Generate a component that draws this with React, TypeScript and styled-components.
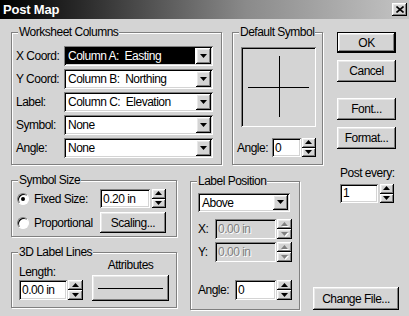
import { Fragment } from "react";
import styled, { createGlobalStyle, css } from "styled-components";

const FACE = "#d4d4d4";

const GlobalStyle = createGlobalStyle`
  html, body {
    margin: 0;
    padding: 0;
    background: ${FACE};
  }
  body {
    font-family: "Liberation Sans", Arial, sans-serif;
    font-size: 12px;
    letter-spacing: -0.5px;
    color: #000;
  }
  * {
    box-sizing: border-box;
  }
`;

const raised = css`
  background: ${FACE};
  box-shadow: inset -1px -1px #000, inset 1px 1px #fff, inset -2px -2px #808080, inset 2px 2px #e8e8e8;
`;

const sunken = css`
  box-shadow: inset 1px 1px #808080, inset -1px -1px #fff, inset 2px 2px #000, inset -2px -2px ${FACE};
`;

const columns = [
  { label: "X Coord:", value: "Column A:  Easting", selected: true },
  { label: "Y Coord:", value: "Column B:  Northing" },
  { label: "Label:", value: "Column C:  Elevation" },
  { label: "Symbol:", value: "None" },
  { label: "Angle:", value: "None" },
];

function Arrow({ up, disabled }: { up?: boolean; disabled?: boolean }) {
  const pts = up ? "0,4 3.5,0 7,4" : "0,0 7,0 3.5,4";
  return (
    <svg width="8" height="5" viewBox="0 0 8 5">
      {disabled && <polygon points={pts} fill="#fff" transform="translate(1,1)" />}
      <polygon points={pts} fill={disabled ? "#808080" : "#000"} />
    </svg>
  );
}

function Spinner({ height = 19, width = 14, disabled }: { height?: number; width?: number; disabled?: boolean }) {
  return (
    <SpinBox $h={height} $w={width}>
      <SpinHalf>
        <Arrow up disabled={disabled} />
      </SpinHalf>
      <SpinHalf>
        <Arrow disabled={disabled} />
      </SpinHalf>
    </SpinBox>
  );
}

function Combo({ width, height = 20, value, selected }: { width: number; height?: number; value: string; selected?: boolean }) {
  return (
    <ComboBox $w={width} $h={height}>
      <ComboText $selected={selected}>{value}</ComboText>
      <DropButton>
        <Arrow />
      </DropButton>
    </ComboBox>
  );
}

function Radio({ checked, label }: { checked?: boolean; label: string }) {
  return (
    <RadioRow>
      <RadioDot $checked={checked} />
      <span>{label}</span>
    </RadioRow>
  );
}

export default function App() {
  return (
    <>
      <GlobalStyle />
      <Window>
        <TitleBar>
          <span>Post Map</span>
          <CloseButton>
            <svg width="8" height="7" viewBox="0 0 8 7">
              <path d="M0.5 0.5 L7.5 6.5 M7.5 0.5 L0.5 6.5" stroke="#000" strokeWidth="1.6" />
            </svg>
          </CloseButton>
        </TitleBar>
        <Body>
          <TopRow>
            <Group $w={211} $h={133}>
              <Legend>Worksheet Columns</Legend>
              <FieldGrid>
                {columns.map((c) => (
                  <Fragment key={c.label}>
                    <span>{c.label}</span>
                    <Combo width={149} value={c.value} selected={c.selected} />
                  </Fragment>
                ))}
              </FieldGrid>
            </Group>
            <Group $w={91} $h={133} $ml={10}>
              <Legend>Default Symbol</Legend>
              <SymbolPane>
                <SymbolBox>
                  <svg width="75" height="80" viewBox="0 0 75 80">
                    <path d="M7 40.5 H68 M38.5 9 V70" stroke="#000" strokeWidth="1" />
                  </svg>
                </SymbolBox>
                <NumberRow>
                  <NumLabel>Angle:</NumLabel>
                  <Field $w={29}>0</Field>
                  <Spinner />
                </NumberRow>
              </SymbolPane>
            </Group>
            <ButtonColumn>
              <PushButton $default $h={21}>OK</PushButton>
              <PushButton $mt={7}>Cancel</PushButton>
              <PushButton $mt={16}>Font...</PushButton>
              <PushButton $mt={7}>Format...</PushButton>
            </ButtonColumn>
          </TopRow>
          <BottomRow>
            <LeftStack>
              <Group $w={166} $h={57}>
                <Legend>Symbol Size</Legend>
                <SizeGrid>
                  <Radio checked label="Fixed Size:" />
                  <InlineRow $gap={2}>
                    <Field $w={50}>0.20 in</Field>
                    <Spinner />
                  </InlineRow>
                  <Radio label="Proportional" />
                  <PushButton $w={66} $h={21}>
                    Scaling...
                  </PushButton>
                </SizeGrid>
              </Group>
              <Group $w={166} $h={56} $mt={15}>
                <Legend>3D Label Lines</Legend>
                <LinesPane>
                  <LengthCol>
                    <span>Length:</span>
                    <InlineRow>
                      <Field $w={48} $h={20}>0.00 in</Field>
                      <Spinner height={20} width={15} />
                    </InlineRow>
                  </LengthCol>
                  <AttrCol>
                    <span>Attributes</span>
                    <PushButton $w={77} $h={26}>
                      <LineSample />
                    </PushButton>
                  </AttrCol>
                </LinesPane>
              </Group>
            </LeftStack>
            <Group $w={110} $h={129} $ml={13} $mt={16}>
              <Legend>Label Position</Legend>
              <PositionPane>
                <Combo width={92} height={19} value="Above" />
                <NumberRow $mt={7}>
                  <NumLabel $grow>X:</NumLabel>
                  <Field $w={61} $h={20} $disabled>0.00 in</Field>
                  <Spinner height={20} width={15} disabled />
                </NumberRow>
                <NumberRow $mt={3}>
                  <NumLabel $grow>Y:</NumLabel>
                  <Field $w={61} $h={20} $disabled>0.00 in</Field>
                  <Spinner height={20} width={15} disabled />
                </NumberRow>
                <NumberRow $mt={18}>
                  <NumLabel $grow>Angle:</NumLabel>
                  <Field $w={41} $h={20}>0</Field>
                  <Spinner height={20} width={15} />
                </NumberRow>
              </PositionPane>
            </Group>
            <RightBottom>
              <PostEvery>
                <span>Post every:</span>
                <InlineRow $gap={2}>
                  <Field $w={38}>1</Field>
                  <Spinner />
                </InlineRow>
              </PostEvery>
              <PushButton $w={86} $h={23}>
                Change File...
              </PushButton>
            </RightBottom>
          </BottomRow>
        </Body>
      </Window>
    </>
  );
}

const Window = styled.div`
  width: 409px;
  height: 316px;
  overflow: hidden;
  background: ${FACE};
`;

const TitleBar = styled.div`
  height: 19px;
  display: flex;
  align-items: center;
  justify-content: space-between;
  padding: 0 2px 0 3px;
  background: linear-gradient(to right, #000 0%, #2a2a2a 20%, #8a8a8a 60%, #c4c4c4 100%);
  color: #fff;
  font-weight: bold;
  font-size: 13px;
  letter-spacing: -0.2px;
`;

const CloseButton = styled.div`
  ${raised}
  width: 15px;
  height: 13px;
  display: flex;
  align-items: center;
  justify-content: center;
`;

const Body = styled.div`
  padding: 13px 0 0 11px;
`;

const TopRow = styled.div`
  display: flex;
  align-items: flex-start;
`;

const BottomRow = styled.div`
  display: flex;
  align-items: flex-start;
`;

const Group = styled.div<{ $w: number; $h: number; $ml?: number; $mt?: number }>`
  position: relative;
  flex: none;
  width: ${(p) => p.$w}px;
  height: ${(p) => p.$h}px;
  margin-left: ${(p) => p.$ml ?? 0}px;
  margin-top: ${(p) => p.$mt ?? 0}px;
  border: 1px solid #808080;
  box-shadow: inset 1px 1px #fff, 1px 1px #fff;
`;

const Legend = styled.span`
  position: absolute;
  top: -8px;
  left: 6px;
  padding: 0 1px;
  line-height: 14px;
  background: ${FACE};
  white-space: nowrap;
`;

const FieldGrid = styled.div`
  display: grid;
  grid-template-columns: 48px 149px;
  grid-auto-rows: 20px;
  row-gap: 3px;
  align-items: center;
  padding: 13px 0 0 4px;
`;

const ComboBox = styled.div<{ $w: number; $h: number }>`
  ${sunken}
  width: ${(p) => p.$w}px;
  height: ${(p) => p.$h}px;
  background: #fff;
  display: flex;
  padding: 2px;
`;

const ComboText = styled.div<{ $selected?: boolean }>`
  flex: 1;
  display: flex;
  align-items: center;
  padding-left: 2px;
  margin-right: 1px;
  white-space: pre;
  overflow: hidden;
  background: ${(p) => (p.$selected ? "#000" : "transparent")};
  color: ${(p) => (p.$selected ? "#fff" : "#000")};
`;

const DropButton = styled.div`
  ${raised}
  width: 15px;
  display: flex;
  align-items: center;
  justify-content: center;
`;

const SpinBox = styled.div<{ $h: number; $w: number }>`
  flex: none;
  width: ${(p) => p.$w}px;
  height: ${(p) => p.$h}px;
  display: flex;
  flex-direction: column;
`;

const SpinHalf = styled.div`
  ${raised}
  flex: 1;
  display: flex;
  align-items: center;
  justify-content: center;
`;

const Field = styled.div<{ $w: number; $h?: number; $disabled?: boolean }>`
  ${sunken}
  flex: none;
  width: ${(p) => p.$w}px;
  height: ${(p) => p.$h ?? 19}px;
  display: flex;
  align-items: center;
  padding-left: 3px;
  white-space: nowrap;
  background: ${(p) => (p.$disabled ? FACE : "#fff")};
  color: ${(p) => (p.$disabled ? "#808080" : "#000")};
  text-shadow: ${(p) => (p.$disabled ? "1px 1px #fff" : "none")};
`;

const SymbolPane = styled.div`
  display: flex;
  flex-direction: column;
  padding: 14px 0 0 4px;
`;

const SymbolBox = styled.div`
  ${sunken}
  width: 75px;
  height: 80px;
  margin-left: 4px;
`;

const NumberRow = styled.div<{ $mt?: number }>`
  display: flex;
  align-items: center;
  gap: 1px;
  margin-top: ${(p) => p.$mt ?? 11}px;
`;

const NumLabel = styled.span<{ $grow?: boolean }>`
  width: 34px;
  flex: ${(p) => (p.$grow ? 1 : "none")};
`;

const ButtonColumn = styled.div`
  display: flex;
  flex-direction: column;
  margin-left: 14px;
`;

const PushButton = styled.div<{ $w?: number; $h?: number; $mt?: number; $default?: boolean }>`
  ${raised}
  flex: none;
  width: ${(p) => p.$w ?? 59}px;
  height: ${(p) => p.$h ?? 22}px;
  margin-top: ${(p) => p.$mt ?? 0}px;
  display: flex;
  align-items: center;
  justify-content: center;
  ${(p) =>
    p.$default &&
    css`
      border: 1px solid #000;
    `}
`;

const LeftStack = styled.div`
  display: flex;
  flex-direction: column;
  margin-top: 15px;
`;

const SizeGrid = styled.div`
  display: grid;
  grid-template-columns: 83px auto;
  grid-template-rows: 19px 21px;
  row-gap: 4px;
  align-items: center;
  padding: 8px 0 0 5px;
`;

const RadioRow = styled.div`
  display: flex;
  align-items: center;
  gap: 5px;
`;

const RadioDot = styled.span<{ $checked?: boolean }>`
  position: relative;
  width: 12px;
  height: 12px;
  border-radius: 50%;
  background: #fff;
  border: 1px solid;
  border-color: #808080 #fff #fff #808080;
  box-shadow: inset 1px 1px #000;
  &::after {
    content: "";
    display: ${(p) => (p.$checked ? "block" : "none")};
    position: absolute;
    left: 3px;
    top: 3px;
    width: 4px;
    height: 4px;
    border-radius: 50%;
    background: #000;
  }
`;

const InlineRow = styled.div<{ $gap?: number }>`
  display: flex;
  align-items: center;
  gap: ${(p) => p.$gap ?? 1}px;
`;

const LinesPane = styled.div`
  display: flex;
  padding-left: 7px;
`;

const LengthCol = styled.div`
  display: flex;
  flex-direction: column;
  gap: 1px;
  line-height: 14px;
  margin-top: 12px;
`;

const AttrCol = styled.div`
  display: flex;
  flex-direction: column;
  align-items: center;
  gap: 3px;
  line-height: 14px;
  margin: 5px 0 0 9px;
`;

const LineSample = styled.div`
  width: 65px;
  border-top: 1px solid #000;
`;

const PositionPane = styled.div`
  display: flex;
  flex-direction: column;
  padding: 11px 0 0 7px;
  width: 101px;
`;

const RightBottom = styled.div`
  display: flex;
  flex-direction: column;
  justify-content: space-between;
  height: 145px;
  margin-left: 13px;
`;

const PostEvery = styled.div`
  display: flex;
  flex-direction: column;
  gap: 4px;
  line-height: 13px;
  margin: 2px 0 0 27px;
`;
